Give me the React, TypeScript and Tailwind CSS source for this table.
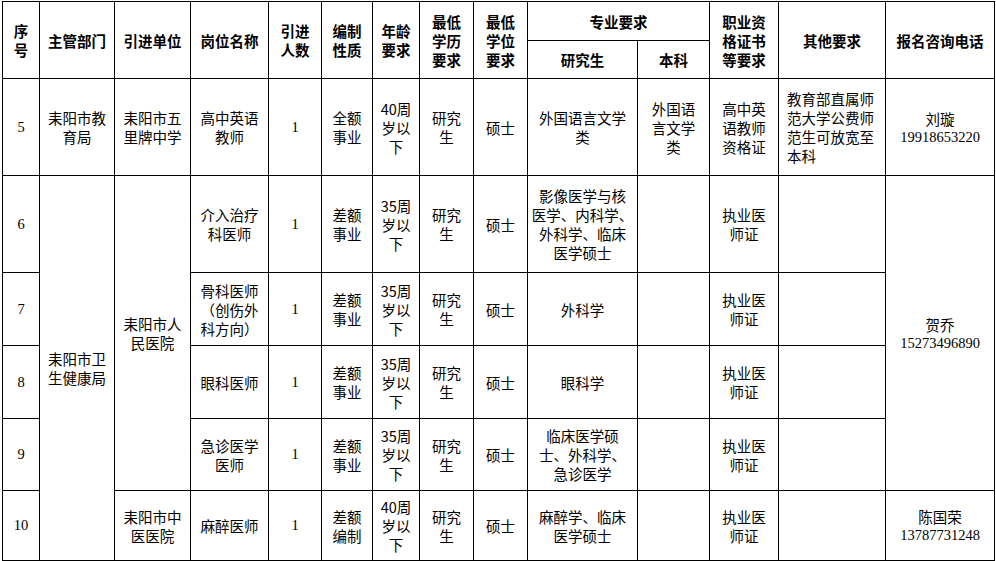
import React from "react";

const cjk = "font-['Noto_Sans_CJK_SC',sans-serif]";
const serif = "font-['Liberation_Serif','Times_New_Roman',serif]";

const cell = "border border-black p-0 text-center align-middle";

function Lines({ text }: { text: string }) {
  const parts = text.split("|");
  return (
    <>
      {parts.map((p, i) => (
        <React.Fragment key={i}>
          {i > 0 && <br />}
          {p}
        </React.Fragment>
      ))}
    </>
  );
}

function Td({
  text,
  rowSpan,
  className = "",
}: {
  text?: string;
  rowSpan?: number;
  className?: string;
}) {
  return (
    <td rowSpan={rowSpan} className={`${cell} ${className}`}>
      {text ? <Lines text={text} /> : null}
    </td>
  );
}

function Phone({ name, tel, rowSpan }: { name: string; tel: string; rowSpan?: number }) {
  return (
    <td rowSpan={rowSpan} className={cell}>
      <div>{name}</div>
      <div className={`${serif} leading-[18px]`}>{tel}</div>
    </td>
  );
}

const widths = [37, 75, 76, 78, 53, 51, 47, 54, 54, 110, 72, 69, 107, 109];

export default function App() {
  return (
    <div className="h-[561px] w-[996px] bg-white pl-[2px] pt-[1px]">
      <table
        className={`w-[993px] table-fixed border-collapse text-[14.5px] leading-[19px] text-black ${cjk}`}
      >
        <colgroup>
          {widths.map((w, i) => (
            <col key={i} style={{ width: w }} />
          ))}
        </colgroup>
        <thead className="font-bold">
          <tr className="h-[39px]">
            <Td rowSpan={2} text="序|号" />
            <Td rowSpan={2} text="主管部门" />
            <Td rowSpan={2} text="引进单位" />
            <Td rowSpan={2} text="岗位名称" />
            <Td rowSpan={2} text="引进|人数" />
            <Td rowSpan={2} text="编制|性质" />
            <Td rowSpan={2} text="年龄|要求" />
            <Td rowSpan={2} text="最低|学历|要求" />
            <Td rowSpan={2} text="最低|学位|要求" />
            <td colSpan={2} className={cell}>
              专业要求
            </td>
            <Td rowSpan={2} text="职业资|格证书|等要求" />
            <Td rowSpan={2} text="其他要求" />
            <Td rowSpan={2} text="报名咨询电话" />
          </tr>
          <tr className="h-[38px]">
            <Td text="研究生" />
            <Td text="本科" />
          </tr>
        </thead>
        <tbody>
          <tr className="h-[97px]">
            <Td className={serif} text="5" />
            <Td text="耒阳市教|育局" />
            <Td text="耒阳市五|里牌中学" />
            <Td text="高中英语|教师" />
            <Td className={serif} text="1" />
            <Td text="全额|事业" />
            <Td text="40周|岁以|下" />
            <Td text="研究|生" />
            <Td text="硕士" />
            <Td text="外国语言文学|类" />
            <Td text="外国语|言文学|类" />
            <Td text="高中英|语教师|资格证" />
            <td className={`${cell} !text-left pl-[8px]`}>
              <Lines text="教育部直属师|范大学公费师|范生可放宽至|本科" />
            </td>
            <Phone name="刘璇" tel="19918653220" />
          </tr>
          <tr className="h-[97px]">
            <Td className={serif} text="6" />
            <Td rowSpan={5} text="耒阳市卫|生健康局" />
            <Td rowSpan={4} text="耒阳市人|民医院" />
            <Td text="介入治疗|科医师" />
            <Td className={serif} text="1" />
            <Td text="差额|事业" />
            <Td text="35周|岁以|下" />
            <Td text="研究|生" />
            <Td text="硕士" />
            <Td text="影像医学与核|医学、内科学、|外科学、临床|医学硕士" />
            <Td />
            <Td text="执业医|师证" />
            <Td />
            <Phone rowSpan={4} name="贺乔" tel="15273496890" />
          </tr>
          <tr className="h-[73px]">
            <Td className={serif} text="7" />
            <Td text="骨科医师|（创伤外|科方向）" />
            <Td className={serif} text="1" />
            <Td text="差额|事业" />
            <Td text="35周|岁以|下" />
            <Td text="研究|生" />
            <Td text="硕士" />
            <Td text="外科学" />
            <Td />
            <Td text="执业医|师证" />
            <Td />
          </tr>
          <tr className="h-[73px]">
            <Td className={serif} text="8" />
            <Td text="眼科医师" />
            <Td className={serif} text="1" />
            <Td text="差额|事业" />
            <Td text="35周|岁以|下" />
            <Td text="研究|生" />
            <Td text="硕士" />
            <Td text="眼科学" />
            <Td />
            <Td text="执业医|师证" />
            <Td />
          </tr>
          <tr className="h-[72px]">
            <Td className={serif} text="9" />
            <Td text="急诊医学|医师" />
            <Td className={serif} text="1" />
            <Td text="差额|事业" />
            <Td text="35周|岁以|下" />
            <Td text="研究|生" />
            <Td text="硕士" />
            <Td text="临床医学硕|士、外科学、|急诊医学" />
            <Td />
            <Td text="执业医|师证" />
            <Td />
          </tr>
          <tr className="h-[70px]">
            <Td className={serif} text="10" />
            <Td text="耒阳市中|医医院" />
            <Td text="麻醉医师" />
            <Td className={serif} text="1" />
            <Td text="差额|编制" />
            <Td text="40周|岁以|下" />
            <Td text="研究|生" />
            <Td text="硕士" />
            <Td text="麻醉学、临床|医学硕士" />
            <Td />
            <Td text="执业医|师证" />
            <Td />
            <Phone name="陈国荣" tel="13787731248" />
          </tr>
        </tbody>
      </table>
    </div>
  );
}
